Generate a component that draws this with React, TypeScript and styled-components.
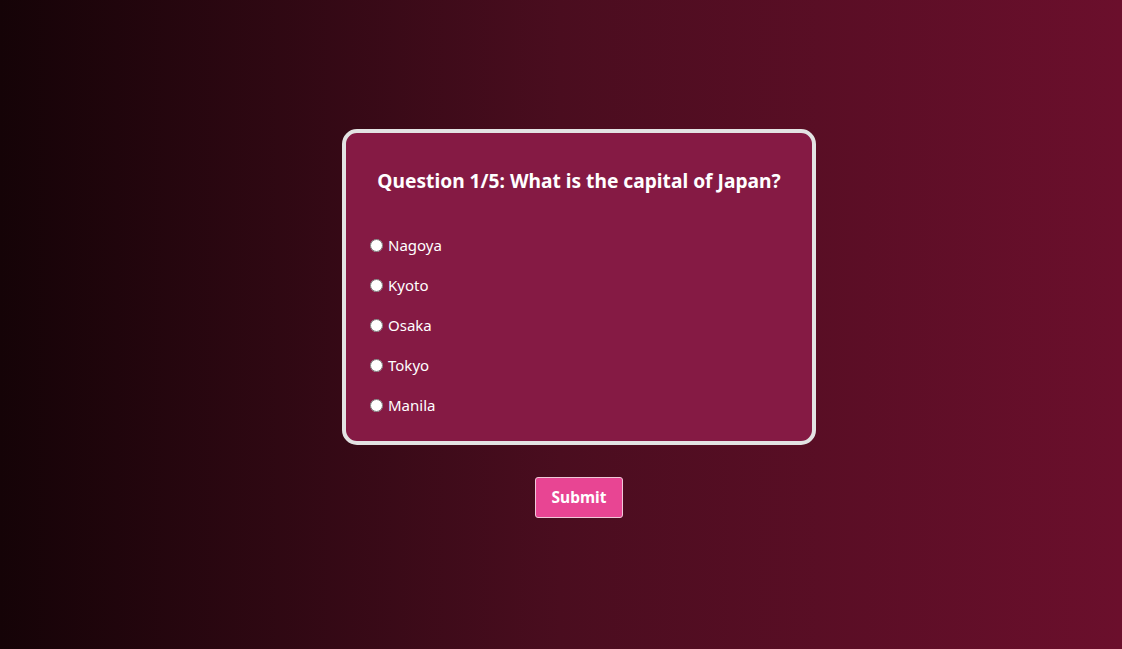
import React, { useState } from "react";
import styled, { createGlobalStyle } from "styled-components";

const GlobalStyle = createGlobalStyle`
  html, body { margin: 0; padding: 0; height: 100%; }
  body {
    font-family: "Noto Sans", "Open Sans", sans-serif;
    background: linear-gradient(to right, #150307 0%, #4a0d1f 50%, #6b0f2c 100%);
    min-height: 649px;
  }
`;

const Page = styled.div`
  min-height: 649px;
  display: flex;
  flex-direction: column;
  align-items: center;
  padding-top: 129px;
  padding-left: 36px;
  box-sizing: border-box;
`;

const Card = styled.div`
  width: 474px;
  box-sizing: border-box;
  background: #851a44;
  border: 4px solid #e3e3e3;
  border-radius: 15px;
  padding: 20px 20px 16px 20px;
  color: #ffffff;
`;

const Heading = styled.h2`
  margin: 16px 0 32px;
  font-size: 19.2px;
  line-height: 24px;
  font-weight: 700;
  text-align: center;
`;

const Option = styled.label`
  display: flex;
  align-items: center;
  height: 40px;
  font-size: 15px;
  cursor: pointer;
`;

const Radio = styled.input`
  margin: 0 5px 0 4px;
  width: 13px;
  height: 13px;
`;

const SubmitButton = styled.button`
  margin-top: 32px;
  font-family: inherit;
  font-size: 15.5px;
  font-weight: 700;
  line-height: 19px;
  color: #ffffff;
  background: #e84593;
  border: 1px solid #f0c8d8;
  border-radius: 3px;
  padding: 10px 16px;
  cursor: pointer;
`;

const options = ["Nagoya", "Kyoto", "Osaka", "Tokyo", "Manila"];

export default function App() {
  const [sel, setSel] = useState<string | null>(null);
  return (
    <>
      <GlobalStyle />
      <Page>
        <Card>
          <Heading>Question 1/5: What is the capital of Japan?</Heading>
          {options.map((o) => (
            <Option key={o}>
              <Radio
                type="radio"
                name="answer"
                checked={sel === o}
                onChange={() => setSel(o)}
              />
              {o}
            </Option>
          ))}
        </Card>
        <SubmitButton>Submit</SubmitButton>
      </Page>
    </>
  );
}
